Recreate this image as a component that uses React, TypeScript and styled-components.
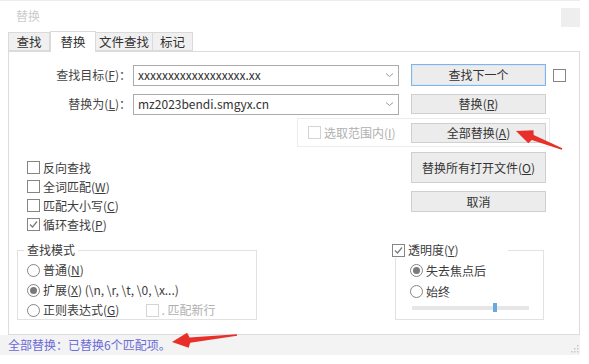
import styled, { createGlobalStyle } from "styled-components";

const GlobalStyle = createGlobalStyle`
  html, body {
    margin: 0;
    padding: 0;
    background: #ffffff;
  }
  body {
    font-family: "Noto Sans CJK SC", "Noto Sans", sans-serif;
    font-size: 12px;
    color: #3c3c3c;
    text-autospace: no-autospace;
  }
`;

const Page = styled.div`
  position: relative;
  width: 589px;
  height: 364px;
  overflow: hidden;
`;

const Window = styled.div`
  width: 580px;
  height: 355px;
  display: flex;
  flex-direction: column;
  border-top: 1px solid #ececec;
  box-sizing: border-box;
`;

const TitleBar = styled.div`
  height: 30px;
  display: flex;
  justify-content: space-between;
  align-items: center;
  padding-left: 16px;
  color: #cccccc;
  font-size: 12px;
  line-height: 16px;
`;

const CloseBox = styled.div`
  align-self: flex-start;
  margin-top: 7px;
  width: 19px;
  height: 19px;
  background: #eeeeee;
`;

const TabStrip = styled.div`
  height: 20px;
  display: flex;
  align-items: flex-end;
  padding-left: 8px;
  position: relative;
  z-index: 1;
`;

const Tab = styled.div<{ $w: number; $active?: boolean }>`
  width: ${(p) => p.$w}px;
  height: ${(p) => (p.$active ? 21 : 19)}px;
  margin-bottom: ${(p) => (p.$active ? -1 : 0)}px;
  box-sizing: border-box;
  display: flex;
  justify-content: center;
  align-items: ${(p) => (p.$active ? "flex-start" : "center")};
  padding-top: ${(p) => (p.$active ? 2 : 0)}px;
  background: ${(p) => (p.$active ? "#ffffff" : "#f0f0f0")};
  border: 1px solid #dadada;
  border-bottom: ${(p) => (p.$active ? "none" : "1px solid #dadada")};
  border-left: ${(p) => (p.$active ? "1px solid #dadada" : "none")};
  &:first-child {
    border-left: 1px solid #dadada;
  }
  font-size: 12.5px;
  line-height: 16px;
  color: #333;
`;

const Panel = styled.div`
  flex: 1;
  margin-left: 8px;
  border: 1px solid #dcdcdc;
  box-sizing: border-box;
  padding-top: 12px;
  display: flex;
  flex-direction: column;
  background: #fff;
`;

const Row = styled.div<{ $top?: number }>`
  display: flex;
  align-items: center;
  height: 22px;
  margin-top: ${(p) => p.$top ?? 0}px;
`;

const FieldLabel = styled.div`
  width: 122px;
  text-align: right;
  line-height: 16px;
  color: #444;
  white-space: nowrap;
`;

/* accelerator key in parentheses, e.g. (F) */
const Acc = styled.span`
  & u {
    text-underline-offset: 1px;
  }
`;

const Caption = styled.span`
  white-space: nowrap;
`;

const Combo = styled.div`
  margin-left: 2px;
  width: 266px;
  height: 21px;
  box-sizing: border-box;
  border: 1px solid #ababab;
  display: flex;
  align-items: center;
  justify-content: space-between;
  padding: 0 4px 0 4px;
  color: #333;
  line-height: 16px;
`;

const Button = styled.div<{ $h?: number; $focus?: boolean }>`
  width: 135px;
  height: ${(p) => p.$h ?? 21}px;
  box-sizing: border-box;
  background: #ececec;
  border: 1px solid ${(p) => (p.$focus ? "#84b4e3" : "#cfcfcf")};
  box-shadow: ${(p) => (p.$focus ? "inset 0 0 0 1px #d6e8f8" : "none")};
  display: flex;
  justify-content: center;
  align-items: center;
  line-height: 16px;
  color: #333;
  white-space: nowrap;
`;

const RowButton = styled(Button)`
  margin-left: 12px;
`;

const CheckBox = styled.span<{ $disabled?: boolean }>`
  width: 13px;
  height: 13px;
  box-sizing: border-box;
  border: 1px solid ${(p) => (p.$disabled ? "#d4d4d4" : "#858585")};
  background: #fff;
  display: inline-flex;
  justify-content: center;
  align-items: center;
  flex-shrink: 0;
`;

const SideCheck = styled(CheckBox)`
  margin-left: 7px;
`;

const RadioMark = styled.span<{ $on?: boolean }>`
  width: 13px;
  height: 13px;
  box-sizing: border-box;
  border-radius: 50%;
  border: 1px solid #858585;
  background: #fff;
  display: inline-flex;
  justify-content: center;
  align-items: center;
  flex-shrink: 0;
  &::after {
    content: "";
    display: ${(p) => (p.$on ? "block" : "none")};
    width: 7px;
    height: 7px;
    border-radius: 50%;
    background: #7a7a7a;
  }
`;

const Option = styled.div<{ $h?: number; $disabled?: boolean }>`
  height: ${(p) => p.$h ?? 19}px;
  display: flex;
  align-items: center;
  gap: 3px;
  line-height: 16px;
  color: ${(p) => (p.$disabled ? "#b0b0b0" : "#3c3c3c")};
  white-space: nowrap;
`;

const RangeBox = styled.div`
  margin-left: 288px;
  margin-top: 3px;
  width: 253px;
  height: 29px;
  box-sizing: border-box;
  border: 1px solid #ececec;
  display: flex;
  align-items: center;
  padding-left: 10px;
  padding-right: 3px;
  & > ${Button} {
    margin-left: auto;
  }
`;

const Middle = styled.div`
  display: flex;
`;

const OptionColumn = styled.div`
  flex: 1;
  padding-left: 18px;
  margin-top: 11px;
`;

const ButtonColumn = styled.div`
  width: 135px;
  margin-top: 5px;
  margin-right: 33px;
  display: flex;
  flex-direction: column;
  gap: 8px;
`;

const BottomRow = styled.div`
  display: flex;
  padding-left: 8px;
  margin-top: 16px;
`;

const GroupBox = styled.div<{ $w: number; $left?: number }>`
  width: ${(p) => p.$w}px;
  height: 70px;
  margin-left: ${(p) => p.$left ?? 0}px;
  box-sizing: border-box;
  border: 1px solid #e2e2e2;
`;

const Legend = styled.div<{ $shift?: number; $w?: number }>`
  width: ${(p) => (p.$w ? `${p.$w}px` : "fit-content")};
  height: 16px;
  margin: -9px 0 0 ${(p) => p.$shift ?? 6}px;
  padding: 0 3px;
  box-sizing: border-box;
  background: #fff;
  display: flex;
  align-items: center;
  gap: 3px;
  line-height: 16px;
  color: #3c3c3c;
`;

const RadioList = styled.div<{ $pad: number }>`
  margin-top: 2px;
  padding-left: ${(p) => p.$pad}px;
`;

const Inline = styled.span`
  margin-left: 24px;
  display: inline-flex;
  align-items: center;
  gap: 2px;
  color: #b0b0b0;
`;

const SliderTrack = styled.div`
  position: relative;
  margin: 4px 0 0 16px;
  width: 117px;
  height: 4px;
  background: #e6e6e6;
`;

const SliderThumb = styled.div`
  position: absolute;
  top: -3px;
  width: 4px;
  height: 9px;
  background: #6aa7dc;
`;

const StatusBar = styled.div`
  height: 20px;
  background: #f3f3f3;
  display: flex;
  align-items: center;
  justify-content: space-between;
  padding-left: 8px;
  color: #6a6ad8;
  line-height: 16px;
`;

const Grip = styled.svg`
  align-self: flex-end;
  margin: 0 1px 2px 0;
`;

const Overlay = styled.svg`
  position: absolute;
  left: 0;
  top: 0;
  pointer-events: none;
`;

const Chevron = () => (
  <svg width="9" height="6" viewBox="0 0 9 6">
    <polyline points="1,1.5 4.5,4.5 8,1.5" fill="none" stroke="#9a9a9a" strokeWidth="1" />
  </svg>
);

const Tick = () => (
  <svg width="11" height="11" viewBox="0 0 11 11">
    <polyline points="2,5.5 4.5,8 9,2.5" fill="none" stroke="#7a7a7a" strokeWidth="1.2" />
  </svg>
);

const Check = ({ on, disabled }: { on?: boolean; disabled?: boolean }) => (
  <CheckBox $disabled={disabled}>{on && <Tick />}</CheckBox>
);

const Key = ({ k }: { k: string }) => (
  <Acc>
    (<u>{k}</u>)
  </Acc>
);

const arrow = (tx: number, ty: number, sx: number, sy: number, len: number, wide: number) => {
  const d = Math.hypot(sx - tx, sy - ty);
  const ux = (sx - tx) / d;
  const uy = (sy - ty) / d;
  const nx = -uy;
  const ny = ux;
  const bx = tx + ux * len;
  const by = ty + uy * len;
  const pts = [
    [tx, ty],
    [bx + nx * wide - ux * 2, by + ny * wide - uy * 2],
    [bx + nx * 2.6, by + ny * 2.6],
    [sx + nx * 0.8, sy + ny * 0.8],
    [sx - nx * 0.8, sy - ny * 0.8],
    [bx - nx * 2.6, by - ny * 2.6],
    [bx - nx * wide - ux * 2, by - ny * wide - uy * 2],
  ];
  return pts.map((p) => p.map((v) => v.toFixed(1)).join(",")).join(" ");
};

export default function App() {
  return (
    <Page>
      <GlobalStyle />
      <Window>
        <TitleBar>
          替换
          <CloseBox />
        </TitleBar>
        <TabStrip>
          <Tab $w={42}>查找</Tab>
          <Tab $w={46} $active>替换</Tab>
          <Tab $w={57}>文件查找</Tab>
          <Tab $w={40}>标记</Tab>
        </TabStrip>
        <Panel>
          <Row>
            <FieldLabel>
              查找目标<Key k="F" />：
            </FieldLabel>
            <Combo>
              xxxxxxxxxxxxxxxxxx.xx
              <Chevron />
            </Combo>
            <RowButton $h={22} $focus>
              查找下一个
            </RowButton>
            <SideCheck />
          </Row>
          <Row $top={7}>
            <FieldLabel>
              替换为<Key k="L" />：
            </FieldLabel>
            <Combo>
              mz2023bendi.smgyx.cn
              <Chevron />
            </Combo>
            <RowButton $h={20}>
              <Caption>
                替换<Key k="R" />
              </Caption>
            </RowButton>
          </Row>
          <RangeBox>
            <Option $disabled>
              <Check disabled />
              <Caption>
                选取范围内<Key k="I" />
              </Caption>
            </Option>
            <Button $h={20}>
              <Caption>
                全部替换<Key k="A" />
              </Caption>
            </Button>
          </RangeBox>
          <Middle>
            <OptionColumn>
              <Option>
                <Check />
                <Caption>反向查找</Caption>
              </Option>
              <Option>
                <Check />
                <Caption>
                  全词匹配<Key k="W" />
                </Caption>
              </Option>
              <Option>
                <Check />
                <Caption>
                  匹配大小写<Key k="C" />
                </Caption>
              </Option>
              <Option>
                <Check on />
                <Caption>
                  循环查找<Key k="P" />
                </Caption>
              </Option>
            </OptionColumn>
            <ButtonColumn>
              <Button $h={31}>
                <Caption>
                  替换所有打开文件<Key k="O" />
                </Caption>
              </Button>
              <Button>取消</Button>
            </ButtonColumn>
          </Middle>
          <BottomRow>
            <GroupBox $w={240}>
              <Legend>查找模式</Legend>
              <RadioList $pad={9}>
                <Option $h={20}>
                  <RadioMark />
                  <Caption>
                    普通<Key k="N" />
                  </Caption>
                </Option>
                <Option $h={20}>
                  <RadioMark $on />
                  <Caption>
                    扩展<Key k="X" />
                    {" (\\n, \\r, \\t, \\0, \\x...)"}
                  </Caption>
                </Option>
                <Option $h={20}>
                  <RadioMark />
                  <Caption>
                    正则表达式<Key k="G" />
                  </Caption>
                  <Inline>
                    <Check disabled />
                    <Caption>. 匹配新行</Caption>
                  </Inline>
                </Option>
              </RadioList>
            </GroupBox>
            <GroupBox $w={149} $left={138}>
              <Legend $shift={-7} $w={119}>
                <Check on />
                <Caption>
                  透明度<Key k="Y" />
                </Caption>
              </Legend>
              <RadioList $pad={14}>
                <Option $h={21}>
                  <RadioMark $on />
                  <Caption>失去焦点后</Caption>
                </Option>
                <Option $h={21}>
                  <RadioMark />
                  <Caption>始终</Caption>
                </Option>
              </RadioList>
              <SliderTrack>
                <SliderThumb style={{ left: 81 }} />
              </SliderTrack>
            </GroupBox>
          </BottomRow>
        </Panel>
        <StatusBar>
          全部替换：已替换6个匹配项。
          <Grip width="9" height="9" viewBox="0 0 9 9">
            {[
              [7, 1],
              [4, 4],
              [7, 4],
              [1, 7],
              [4, 7],
              [7, 7],
            ].map(([x, y]) => (
              <rect key={`${x}-${y}`} x={x} y={y} width="1.5" height="1.5" fill="#c6c6c6" />
            ))}
          </Grip>
        </StatusBar>
      </Window>
      <Overlay width="589" height="364" viewBox="0 0 589 364">
        <polygon points={arrow(516, 131, 562, 149, 18, 7)} fill="#e8302a" />
        <polygon points={arrow(172, 342, 237, 335, 18, 7.5)} fill="#e8302a" />
      </Overlay>
    </Page>
  );
}
